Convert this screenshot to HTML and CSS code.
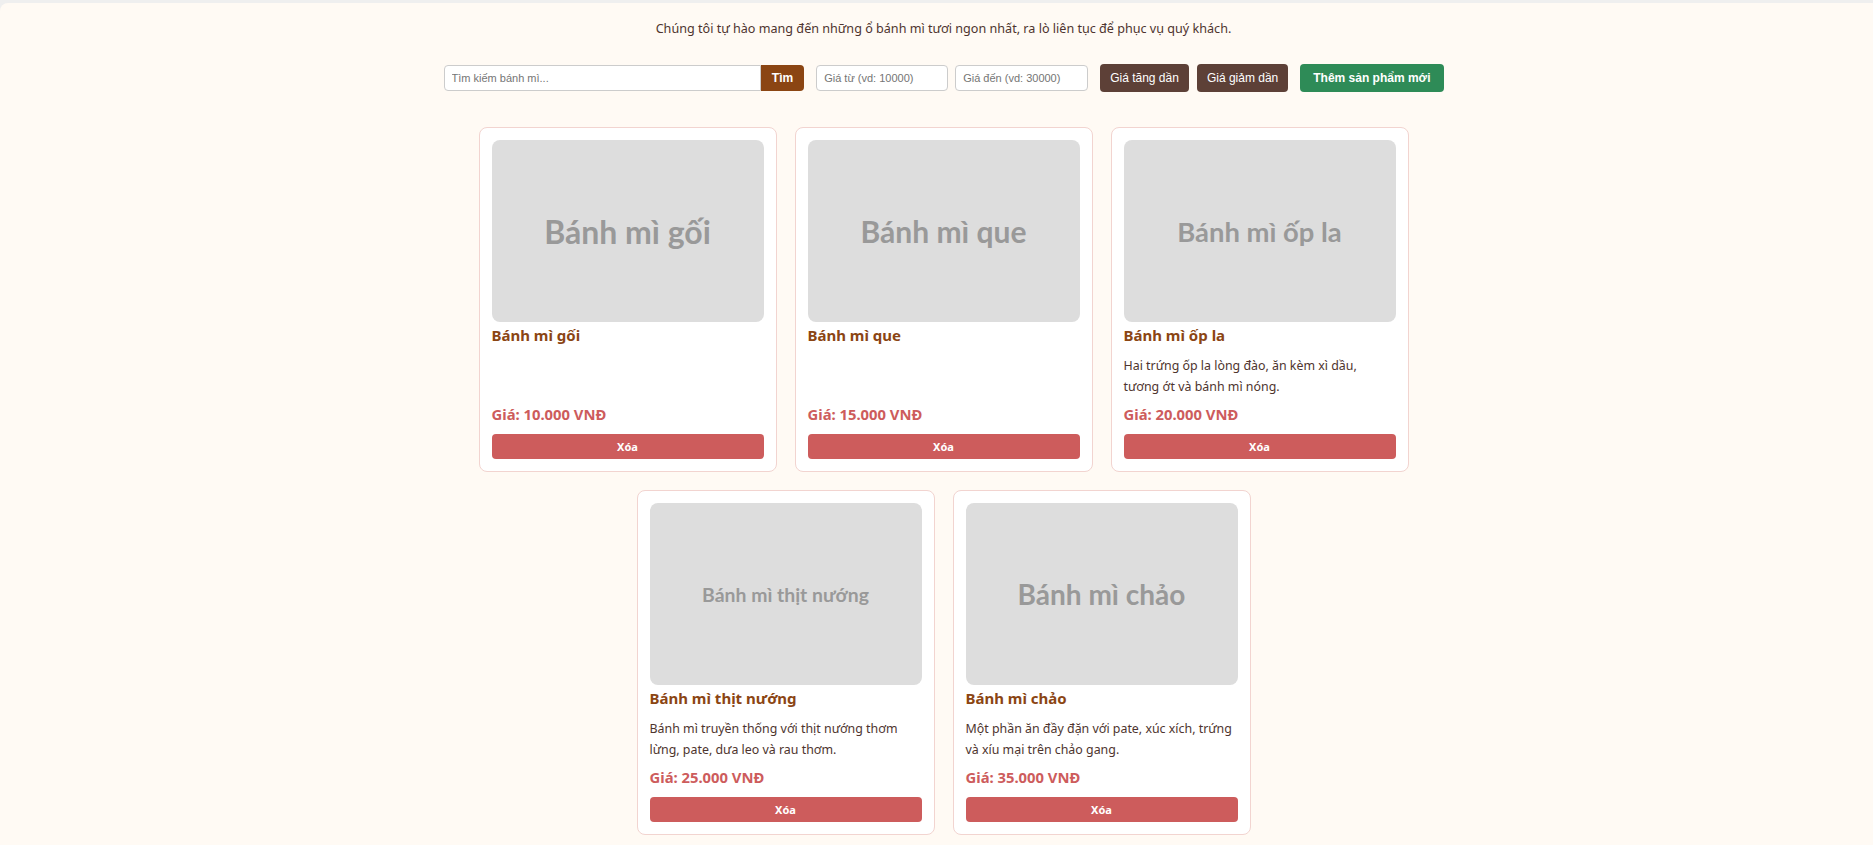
FILE: index.html
```html
<!DOCTYPE html>
<html lang="vi">
<head>
<meta charset="utf-8">
<title>Bánh mì</title>
<link rel="stylesheet" href="styles.css">
</head>
<body>
<div class="page">
  <div class="container">
    <p class="intro">Chúng tôi tự hào mang đến những ổ bánh mì tươi ngon nhất, ra lò liên tục để phục vụ quý khách.</p>
    <div class="toolbar">
      <div class="search">
        <input class="search-input" type="text" placeholder="Tìm kiếm bánh mì...">
        <button class="search-btn">Tìm</button>
      </div>
      <div class="price-filter">
        <input class="price-input" type="text" placeholder="Giá từ (vd: 10000)">
        <input class="price-input" type="text" placeholder="Giá đến (vd: 30000)">
      </div>
      <div class="sort">
        <button class="sort-btn">Giá tăng dần</button>
        <button class="sort-btn">Giá giảm dần</button>
      </div>
      <button class="add-btn">Thêm sản phẩm mới</button>
    </div>
    <div class="product-list">
      <div class="card">
        <div class="thumb"><span style="font-size:32px">Bánh mì gối</span></div>
        <h3 class="name">Bánh mì gối</h3>
        <p class="price">Giá: 10.000 VNĐ</p>
        <button class="delete-btn">Xóa</button>
      </div>
      <div class="card">
        <div class="thumb"><span style="font-size:30px">Bánh mì que</span></div>
        <h3 class="name">Bánh mì que</h3>
        <p class="price">Giá: 15.000 VNĐ</p>
        <button class="delete-btn">Xóa</button>
      </div>
      <div class="card">
        <div class="thumb"><span style="font-size:27.4px">Bánh mì ốp la</span></div>
        <h3 class="name">Bánh mì ốp la</h3>
        <p class="desc">Hai trứng ốp la lòng đào, ăn kèm xì dầu, tương ớt và bánh mì nóng.</p>
        <p class="price">Giá: 20.000 VNĐ</p>
        <button class="delete-btn">Xóa</button>
      </div>
      <div class="card">
        <div class="thumb"><span style="font-size:19.4px">Bánh mì thịt nướng</span></div>
        <h3 class="name">Bánh mì thịt nướng</h3>
        <p class="desc">Bánh mì truyền thống với thịt nướng thơm lừng, pate, dưa leo và rau thơm.</p>
        <p class="price">Giá: 25.000 VNĐ</p>
        <button class="delete-btn">Xóa</button>
      </div>
      <div class="card">
        <div class="thumb"><span style="font-size:28px">Bánh mì chảo</span></div>
        <h3 class="name">Bánh mì chảo</h3>
        <p class="desc">Một phần ăn đầy đặn với pate, xúc xích, trứng và xíu mại trên chảo gang.</p>
        <p class="price">Giá: 35.000 VNĐ</p>
        <button class="delete-btn">Xóa</button>
      </div>
    </div>
  </div>
</div>
</body>
</html>
```
FILE: styles.css
```css
html, body {
  margin: 0;
  padding: 0;
}
body {
  background: #efefef;
  overflow: hidden;
  font-family: "Noto Sans", "Liberation Sans", sans-serif;
}
.page {
  margin-top: 3px;
  width: calc(100% + 14px);
  min-height: 842px;
  background: #fffaf4;
  border-radius: 8px 0 0 0;
  padding-top: 16px;
  box-sizing: border-box;
}
.container {
  max-width: 1000px;
  margin: 0 auto;
}
.intro {
  margin: 0;
  text-align: center;
  font-size: 12.6px;
  line-height: 20px;
  color: #4e342e;
}
.toolbar {
  display: flex;
  align-items: center;
  gap: 12px;
  margin-top: 25px;
  height: 28px;
}
.search {
  flex: 1;
  display: flex;
}
input {
  font-family: "Liberation Sans", Arial, sans-serif;
  font-size: 11px;
  height: 26px;
  box-sizing: border-box;
  border: 1px solid #cccccc;
  border-radius: 4px;
  padding: 0 7px;
  background: #fff;
  color: #333;
  outline: none;
}
input::placeholder {
  color: #757575;
}
.search-input {
  flex: 1;
  min-width: 0;
  border-radius: 4px 0 0 4px;
}
.search-btn {
  height: 26px;
  border: none;
  border-radius: 0 4px 4px 0;
  background: #8b4513;
  color: #fff;
  font-family: "Liberation Sans", Arial, sans-serif;
  font-weight: bold;
  font-size: 12px;
  padding: 0 11px;
}
.price-filter {
  display: flex;
  gap: 7px;
}
.price-input {
  width: 132px;
}
.price-input + .price-input {
  width: 133px;
}
.sort {
  display: flex;
  gap: 8px;
}
.sort-btn, .add-btn {
  height: 28px;
  border: none;
  border-radius: 4px;
  color: #fff;
  font-family: "Liberation Sans", Arial, sans-serif;
  font-size: 12px;
}
.sort-btn {
  background: #5d4037;
  padding: 0 10px;
}
.add-btn {
  background: #2e8b57;
  font-weight: bold;
  padding: 0 13px;
}
.product-list {
  display: flex;
  flex-wrap: wrap;
  justify-content: center;
  margin-top: 26px;
}
.card {
  width: 298px;
  box-sizing: border-box;
  margin: 9px;
  background: #fff;
  border: 1px solid #f2d4d0;
  border-radius: 8px;
  padding: 12px;
  display: flex;
  flex-direction: column;
}
.thumb {
  height: 182px;
  background: #dddddd;
  border-radius: 8px;
  display: flex;
  align-items: center;
  justify-content: center;
  font-family: Lato, sans-serif;
  font-weight: bold;
  color: #999999;
}
.name {
  margin: 3px 0 10px;
  font-size: 15px;
  line-height: 20px;
  font-weight: bold;
  color: #8b4513;
}
.desc {
  margin: 0 0 7px;
  font-size: 12.4px;
  line-height: 21px;
  color: #4e342e;
}
.price {
  margin: auto 0 10px;
  font-size: 14.8px;
  line-height: 20px;
  font-weight: bold;
  color: #cd5c5c;
}
.delete-btn {
  height: 25px;
  border: none;
  border-radius: 4px;
  background: #cd5c5c;
  color: #fff;
  font-family: "Noto Sans", sans-serif;
  font-weight: bold;
  font-size: 11px;
}
```
